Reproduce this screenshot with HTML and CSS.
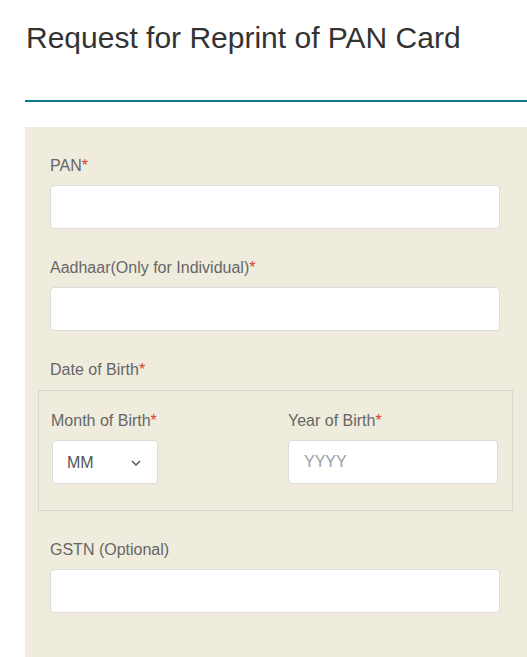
FILE: index.html
```html
<!DOCTYPE html>
<html lang="en">
<head>
<meta charset="utf-8">
<title>Request for Reprint of PAN Card</title>
<link rel="stylesheet" href="styles.css">
</head>
<body>
<div class="page">
  <h1 class="title">Request for Reprint of PAN Card</h1>
  <div class="rule"></div>
  <form class="panel">
    <div class="group">
      <label class="label" for="pan">PAN<span class="req">*</span></label>
      <input class="field" id="pan" type="text">
    </div>
    <div class="group">
      <label class="label" for="aadhaar">Aadhaar(Only for Individual)<span class="req">*</span></label>
      <input class="field" id="aadhaar" type="text">
    </div>
    <div class="group group-dob">
      <div class="label label-dob">Date of Birth<span class="req">*</span></div>
      <fieldset class="dob">
        <div class="dob-col">
          <label class="label" for="mob">Month of Birth<span class="req">*</span></label>
          <div class="select-wrap">
            <select class="select" id="mob">
              <option>MM</option>
            </select>
            <svg class="chevron" width="10" height="6" viewBox="0 0 10 6"><path d="M1 1 L5 5 L9 1" fill="none" stroke="#555a66" stroke-width="1.5"/></svg>
          </div>
        </div>
        <div class="dob-col">
          <label class="label" for="yob">Year of Birth<span class="req">*</span></label>
          <input class="field field-year" id="yob" type="text" placeholder="YYYY">
        </div>
      </fieldset>
    </div>
    <div class="group">
      <label class="label" for="gstn">GSTN (Optional)</label>
      <input class="field" id="gstn" type="text">
    </div>
  </form>
</div>
</body>
</html>
```
FILE: styles.css
```css
html, body {
  margin: 0;
  padding: 0;
  background: #ffffff;
  overflow: hidden;
}
body {
  font-family: "Liberation Sans", Arial, sans-serif;
  color: #333333;
}
.page {
  padding: 20px 0 0 25px;
}
.title {
  margin: 0 0 0 1px;
  font-size: 30px;
  line-height: 36px;
  font-weight: normal;
  color: #333333;
}
.rule {
  margin-top: 44px;
  height: 2px;
  background: #0b7a8b;
}
.panel {
  margin-top: 25px;
  background: #efecdd;
  padding: 29px 27px 15px 25px;
}
.group {
  margin-bottom: 29px;
}
.label {
  display: block;
  font-size: 16px;
  line-height: 20px;
  color: #666666;
  margin-bottom: 9px;
}
.req {
  color: #d9402b;
}
.field {
  display: block;
  box-sizing: border-box;
  width: 100%;
  height: 44px;
  border: 1px solid #dcdcdc;
  border-radius: 4px;
  background: #ffffff;
  font-family: "Liberation Sans", Arial, sans-serif;
  font-size: 16px;
  color: #555555;
  padding: 0 15px;
  outline: none;
}
.field::placeholder {
  color: #999da5;
}
.label-dob {
  margin-bottom: 10px;
}
.dob {
  display: grid;
  grid-template-columns: 237px 210px;
  margin: 0 -13px 0 -12px;
  padding: 20px 14px 26px 12px;
  border: 1px solid #d8d6cf;
  min-inline-size: 0;
}
.dob-col {
  min-width: 0;
}
.select-wrap {
  position: relative;
  width: 106px;
  margin-left: 1px;
}
.select {
  appearance: none;
  -webkit-appearance: none;
  display: block;
  box-sizing: border-box;
  width: 100%;
  height: 44px;
  border: 1px solid #dcdcdc;
  border-radius: 4px;
  background: #ffffff;
  font-family: "Liberation Sans", Arial, sans-serif;
  font-size: 16px;
  color: #555555;
  padding: 0 14px;
  outline: none;
}
.chevron {
  position: absolute;
  right: 17px;
  top: 20px;
  pointer-events: none;
}
.field-year {
  width: 210px;
}
```
